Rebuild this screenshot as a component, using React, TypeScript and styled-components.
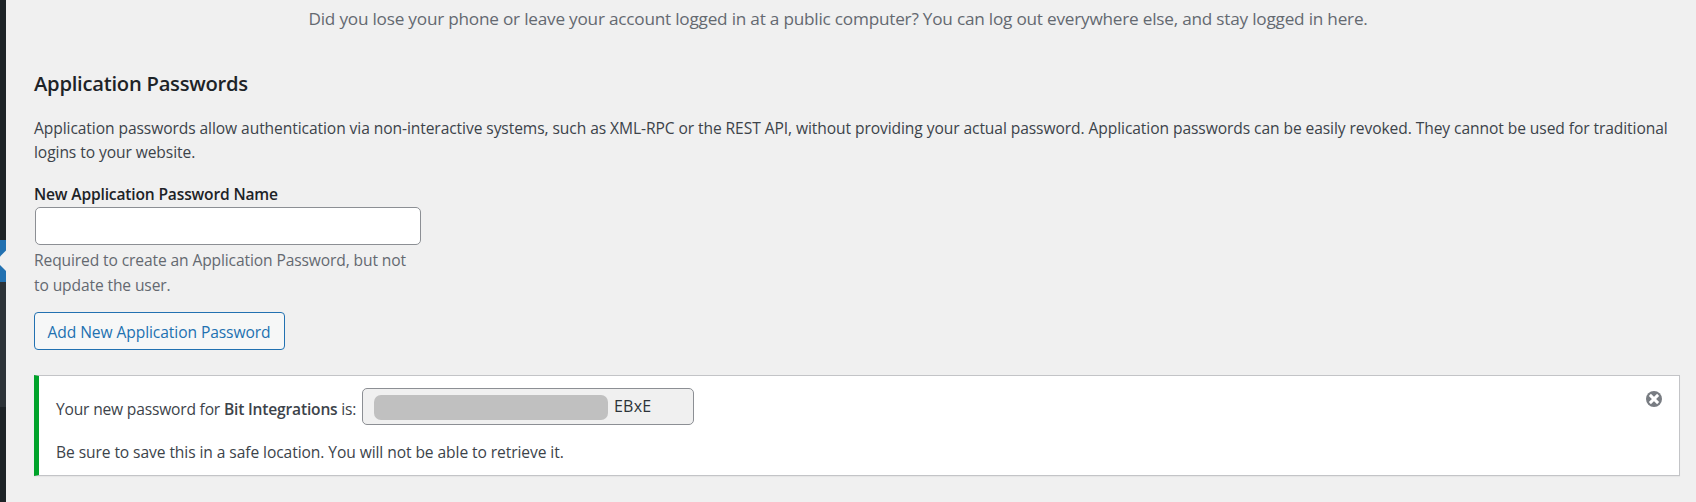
import React from 'react';
import styled, { createGlobalStyle } from 'styled-components';

const GlobalStyle = createGlobalStyle`
  * { box-sizing: border-box; }
  body {
    margin: 0;
    background: #f0f0f0;
    color: #3c434a;
    font-family: "Open Sans", "Noto Sans", sans-serif;
    font-size: 15.6px;
    line-height: 24px;
    letter-spacing: -0.084px;
  }
`;

const Page = styled.div`
  display: flex;
  height: 502px;
  overflow: hidden;
`;

const MenuEdge = styled.aside`
  display: flex;
  flex-direction: column;
  flex: 0 0 6px;
  background: #1d2327;
  padding-top: 240px;
`;

const CurrentItem = styled.svg`
  display: block;
  width: 6px;
  height: 42px;
  background: #2271b1;
`;

const Submenu = styled.div`
  height: 125px;
  background: #2c3338;
`;

const Content = styled.main`
  flex: 1;
  min-width: 0;
  padding: 7px 16px 0 28px;
`;

const SessionsHint = styled.p`
  margin: 0 0 38px 274.5px;
  color: #646970;
  font-size: 17.2px;
  letter-spacing: -0.22px;
  white-space: nowrap;
`;

const Heading = styled.h2`
  margin: 0 0 19px;
  color: #1d2327;
  font-size: 20.2px;
  font-weight: 600;
  line-height: 28px;
  letter-spacing: -0.25px;
`;

const Intro = styled.p`
  margin: 0 0 18px;
`;

const Field = styled.div`
  display: flex;
  flex-direction: column;
  width: 387px;
`;

const Label = styled.label`
  color: #1d2327;
  font-weight: 600;
  letter-spacing: -0.17px;
`;

const TextInput = styled.input`
  height: 38px;
  margin: 1px 0 0 1px;
  border: 1px solid #8c8f94;
  border-radius: 5px;
  background: #fff;
`;

const Description = styled.p`
  margin: 3px 0 14px;
  color: #646970;
  line-height: 25px;
  letter-spacing: -0.12px;
`;

const SecondaryButton = styled.button`
  display: block;
  width: 251px;
  height: 38px;
  padding: 2px 1px 0 0;
  border: 1px solid #2271b1;
  border-radius: 4px;
  background: #f6f7f7;
  color: #2271b1;
  font: inherit;
  letter-spacing: inherit;
  white-space: nowrap;
`;

const Notice = styled.section`
  display: flex;
  justify-content: space-between;
  height: 101px;
  margin-top: 25px;
  padding: 12px 17px 0 17px;
  border: 1px solid #c3c4c7;
  border-left: 5px solid #00a32a;
  background: #fff;
  box-shadow: 0 1px 1px rgba(0, 0, 0, 0.04);
`;

const PasswordRow = styled.div`
  display: flex;
  align-items: center;
  height: 37px;
  margin-bottom: 15px;
`;

const PasswordLabel = styled.span`
  width: 306px;
  padding-top: 5px;
  letter-spacing: -0.19px;
  white-space: nowrap;
`;

const Strong = styled.strong`
  font-weight: 600;
`;

const PasswordBox = styled.div`
  display: flex;
  align-items: center;
  gap: 6px;
  width: 332px;
  height: 37px;
  padding-left: 11px;
  border: 1px solid #8c8f94;
  border-radius: 5px;
  background: #f0f0f0;
  color: #2c3338;
  font-size: 16px;
  letter-spacing: 0.2px;
`;

const Redaction = styled.span`
  width: 234px;
  height: 25px;
  margin-top: 2px;
  border-radius: 7px;
  background: #c0c0c0;
`;

const PasswordTail = styled.span`
  margin-top: -1px;
`;

const DismissButton = styled.button`
  width: 16px;
  height: 16px;
  margin-top: 3px;
  padding: 0;
  border: 0;
  background: none;
`;

const DismissIcon = styled.svg`
  display: block;
`;

export default function App() {
  return (
    <>
      <GlobalStyle />
      <Page>
        <MenuEdge>
          <CurrentItem viewBox="0 0 6 42">
            <path d="M6 10.5V31L0 25V16.5Z" fill="#f0f0f0" />
          </CurrentItem>
          <Submenu />
        </MenuEdge>
        <Content>
          <SessionsHint>
            Did you lose your phone or leave your account logged in at a public computer? You can log out everywhere else, and stay logged in here.
          </SessionsHint>
          <Heading>Application Passwords</Heading>
          <Intro>
            Application passwords allow authentication via non-interactive systems, such as XML-RPC or the REST API, without providing your actual password. Application passwords can be easily revoked. They cannot be used for traditional logins to your website.
          </Intro>
          <Field>
            <Label htmlFor="password-name">New Application Password Name</Label>
            <TextInput id="password-name" type="text" />
            <Description>Required to create an Application Password, but not to update the user.</Description>
          </Field>
          <SecondaryButton type="button">Add New Application Password</SecondaryButton>
          <Notice>
            <div>
              <PasswordRow>
                <PasswordLabel>
                  Your new password for <Strong>Bit Integrations</Strong> is:
                </PasswordLabel>
                <PasswordBox>
                  <Redaction />
                  <PasswordTail>EBxE</PasswordTail>
                </PasswordBox>
              </PasswordRow>
              <div>Be sure to save this in a safe location. You will not be able to retrieve it.</div>
            </div>
            <DismissButton type="button" aria-label="Dismiss">
              <DismissIcon width="16" height="16" viewBox="0 0 16 16">
                <circle cx="8" cy="8" r="8" fill="#787c82" />
                <path d="M4.9 4.9l6.2 6.2M11.1 4.9l-6.2 6.2" stroke="#fff" strokeWidth="2.9" strokeLinecap="square" />
              </DismissIcon>
            </DismissButton>
          </Notice>
        </Content>
      </Page>
    </>
  );
}
